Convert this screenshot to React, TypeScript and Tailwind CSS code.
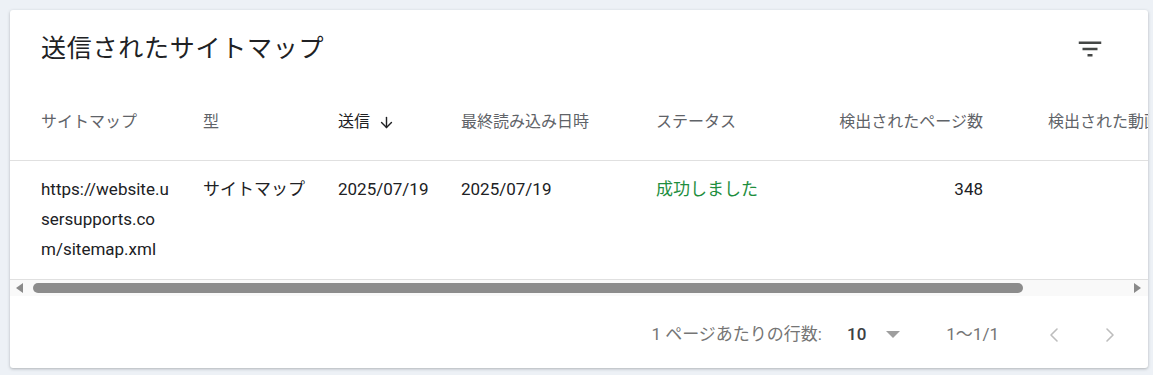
import React from 'react';
import { ArrowDown, ChevronLeft, ChevronRight } from 'lucide-react';

const font = { fontFamily: 'Roboto, "Noto Sans CJK JP", sans-serif' };

function FilterIcon() {
  return (
    <svg width="30" height="30" viewBox="0 0 24 24" fill="#444746">
      <path d="M10 18h4v-2h-4v2zM3 6v2h18V6H3zm3 7h12v-2H6v2z" />
    </svg>
  );
}

export default function App() {
  return (
    <div
      className="w-full h-[375px] bg-[#edf1f6] pt-[10px] pl-[10px] pr-[5px] pb-[7px]"
      style={font}
    >
      <div className="h-[358px] bg-white rounded-[3px] shadow-[0_1px_3px_rgba(60,64,67,0.35)] flex flex-col overflow-hidden">
        {/* Title */}
        <div className="h-[76px] shrink-0 flex items-center justify-between pl-[31px] pr-[43px] pt-[1px]">
          <h2 className="text-[25px] text-[#202124] tracking-[0.03em]">送信されたサイトマップ</h2>
          <FilterIcon />
        </div>

        {/* Table */}
        <div className="overflow-hidden">
          <div className="flex h-[75px] border-b border-[#e0e0e0] items-center text-[16px] text-[#5f6368] whitespace-nowrap pb-[2px]">
            <div className="w-[193px] shrink-0 pl-[31px]">サイトマップ</div>
            <div className="w-[135px] shrink-0">型</div>
            <div className="w-[123px] shrink-0 flex items-center gap-[8px] text-[#202124]">
              送信
              <ArrowDown className="w-[17px] h-[17px]" strokeWidth={2} />
            </div>
            <div className="w-[195px] shrink-0">最終読み込み日時</div>
            <div className="w-[160px] shrink-0">ステータス</div>
            <div className="w-[232px] shrink-0 pr-[65px] text-right">検出されたページ数</div>
            <div className="shrink-0">検出された動画数</div>
          </div>
          <div className="flex h-[119px] border-b border-[#e0e0e0] pt-[13px] text-[17px] leading-[30px] text-[#202124] whitespace-nowrap">
            <div className="w-[193px] shrink-0 pl-[31px] pr-[28px] whitespace-normal break-all">
              https://website.usersupports.com/sitemap.xml
            </div>
            <div className="w-[135px] shrink-0">サイトマップ</div>
            <div className="w-[123px] shrink-0">2025/07/19</div>
            <div className="w-[195px] shrink-0">2025/07/19</div>
            <div className="w-[160px] shrink-0 text-[#1e8e3e]">成功しました</div>
            <div className="w-[232px] shrink-0 pr-[65px] text-right">348</div>
            <div className="shrink-0"></div>
          </div>
        </div>

        {/* Scrollbar */}
        <div className="h-[16px] shrink-0 bg-[#f9f9f9] flex items-center">
          <div className="w-[23px] shrink-0 flex justify-start pl-[6px]">
            <div className="w-0 h-0 border-y-[5px] border-y-transparent border-r-[7px] border-r-[#8a8a8a]" />
          </div>
          <div className="w-[990px] h-[10px] rounded-full bg-[#8c8c8c]" />
          <div className="flex-1" />
          <div className="w-[14px] shrink-0 flex justify-start">
            <div className="w-0 h-0 border-y-[5px] border-y-transparent border-l-[7px] border-l-[#8a8a8a]" />
          </div>
        </div>

        {/* Footer */}
        <div className="flex-1 flex items-center justify-end pr-[26px] pt-[5px] text-[17px] text-[#757575] whitespace-nowrap">
          <span>1 ページあたりの行数:</span>
          <span className="ml-[25px] text-[#3c4043] font-medium">10</span>
          <div className="ml-[20px] w-0 h-0 border-x-[7px] border-x-transparent border-t-[7px] border-t-[#9e9e9e]" />
          <span className="ml-[46px]">1〜1/1</span>
          <ChevronLeft className="ml-[43px] w-[24px] h-[24px] text-[#bdbdbd]" strokeWidth={1.6} />
          <ChevronRight className="ml-[32px] w-[24px] h-[24px] text-[#bdbdbd]" strokeWidth={1.6} />
        </div>
      </div>
    </div>
  );
}
